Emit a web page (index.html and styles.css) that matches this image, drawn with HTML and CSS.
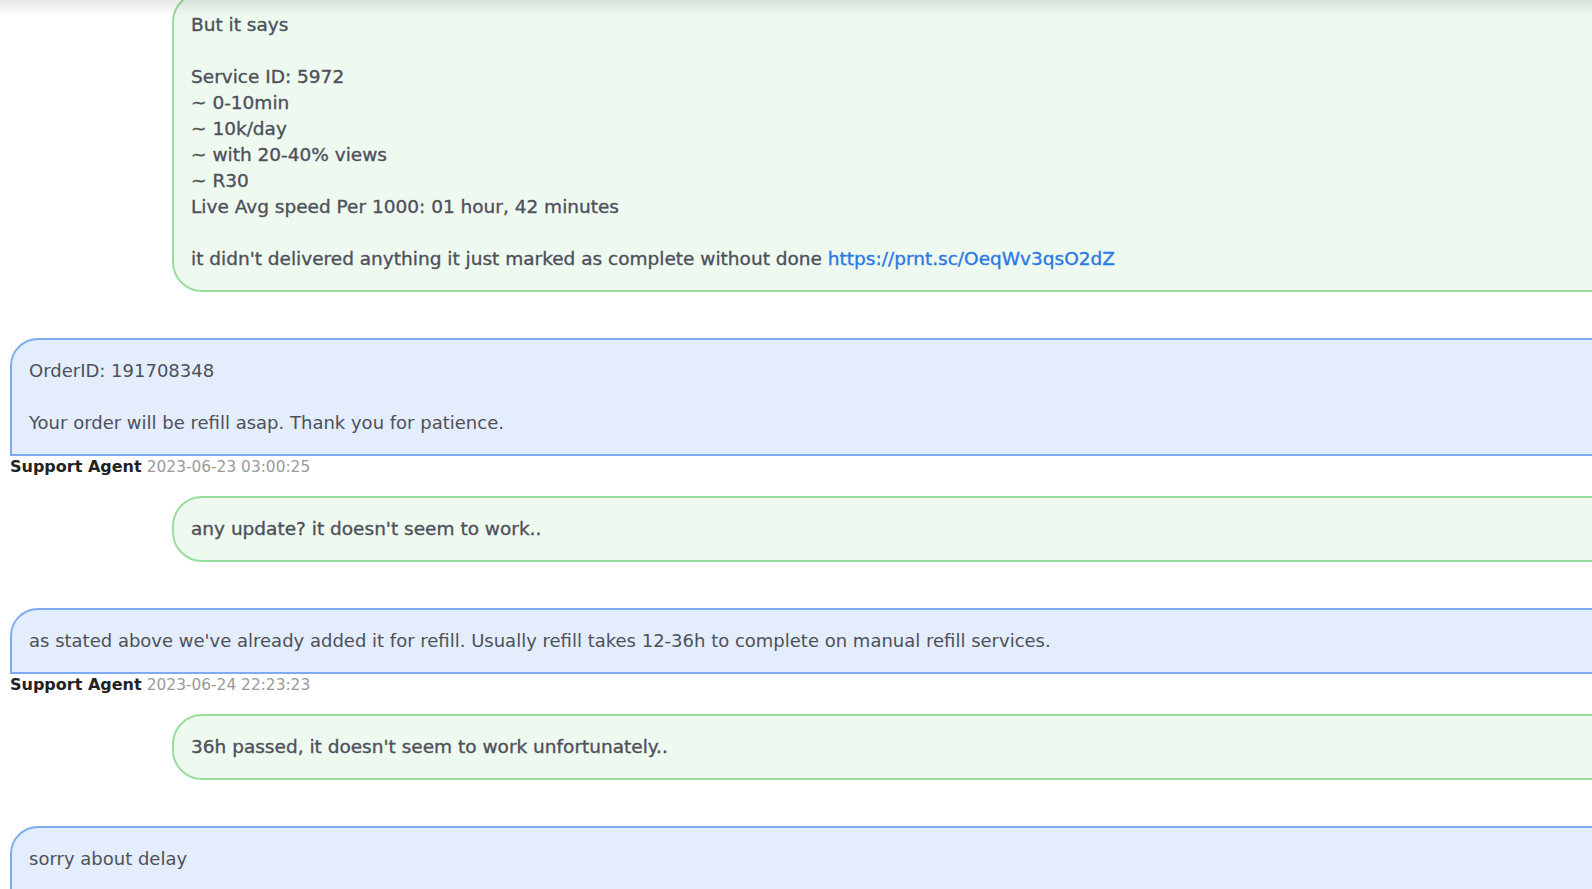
FILE: index.html
```html
<!DOCTYPE html>
<html lang="en">
<head>
  <meta charset="UTF-8" />
  <title>Ticket</title>
  <link rel="stylesheet" href="styles.css">
</head>
<body>

<div class="top-shadow"></div>

<div class="ticket-messages">
  <div class="msg user">
    <div class="bubble">But it says<br><br>Service ID: 5972<br>~ 0-10min<br>~ 10k/day<br>~ with 20-40% views<br>~ R30<br>Live Avg speed Per 1000: 01 hour, 42 minutes<br><br>it didn't delivered anything it just marked as complete without done <a href="#">https://prnt.sc/OeqWv3qsO2dZ</a></div>
  </div>

  <div class="msg agent">
    <div class="bubble">OrderID: 191708348<br><br>Your order will be refill asap. Thank you for patience.</div>
    <div class="meta"><b>Support Agent</b> <span class="time">2023-06-23 03:00:25</span></div>
  </div>

  <div class="msg user">
    <div class="bubble">any update? it doesn't seem to work..</div>
  </div>

  <div class="msg agent">
    <div class="bubble">as stated above we've already added it for refill. Usually refill takes 12-36h to complete on manual refill services.</div>
    <div class="meta"><b>Support Agent</b> <span class="time">2023-06-24 22:23:23</span></div>
  </div>

  <div class="msg user">
    <div class="bubble">36h passed, it doesn't seem to work unfortunately..</div>
  </div>

  <div class="msg agent">
    <div class="bubble">sorry about delay</div>
  </div>
</div>

</body>
</html>
```

FILE: styles.css
```css
body {
  margin: 0;
  background: #fff;
  font-family: "DejaVu Sans", Arial, sans-serif;
  color: #4e505b;
  overflow: hidden;
}
.top-shadow {
  position: fixed;
  top: 0; left: 0;
  width: 100%;
  height: 16px;
  background: linear-gradient(rgba(0, 0, 0, 0.09), rgba(0, 0, 0, 0));
  z-index: 10;
}
.ticket-messages {
  margin-top: -8px;
  padding-left: 10px;
}
.msg {
  margin-right: -40px;
}
.bubble {
  font-size: 18px;
  line-height: 26px;
  padding: 18px 17px;
  word-wrap: break-word;
}
.user {
  margin-left: 162px;
  margin-bottom: 46px;
}
.user .bubble {
  background: #eef9ef;
  border: 2px solid #97dd9c;
  border-radius: 30px 0 0 30px;
  font-size: 18.5px;
  -webkit-text-stroke: 0.35px currentColor;
}
.user .bubble a {
  color: #2a78e4;
  text-decoration: none;
}
.agent {
  margin-bottom: 16px;
}
.agent .bubble {
  background: #e3edfc;
  border: 2px solid #7faaf2;
  border-radius: 28px 0 0 0;
}
.agent .bubble + .meta {
  margin-top: -2px;
}
.meta {
  font-size: 16px;
  line-height: 26px;
  color: #222;
}
.meta b {
  font-weight: 700;
}
.time {
  color: #9a9a9a;
  font-size: 15.4px;
}
```
